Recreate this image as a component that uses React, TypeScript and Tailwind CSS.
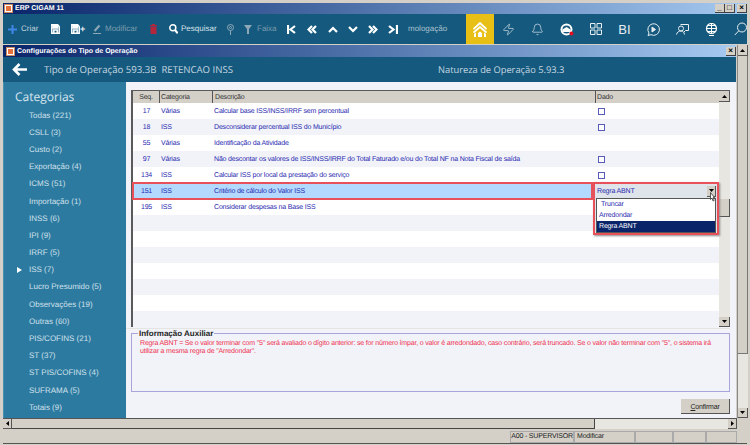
import React from 'react';
import { Bell, Zap } from 'lucide-react';

const categorias = [
  'Todas (221)', 'CSLL (3)', 'Custo (2)', 'Exportação (4)', 'ICMS (51)', 'Importação (1)', 'INSS (6)', 'IPI (9)', 'IRRF (5)',
  'ISS (7)', 'Lucro Presumido (5)', 'Observações (19)', 'Outras (60)', 'PIS/COFINS (21)', 'ST (37)', 'ST PIS/COFINS (4)', 'SUFRAMA (5)', 'Totais (9)',
];

const linhas = [
  { seq: '17', cat: 'Várias', desc: 'Calcular base ISS/INSS/IRRF sem percentual', check: true },
  { seq: '18', cat: 'ISS', desc: 'Desconsiderar percentual ISS do Município', check: true },
  { seq: '55', cat: 'Várias', desc: 'Identificação da Atividade', check: false },
  { seq: '97', cat: 'Várias', desc: 'Não descontar os valores de ISS/INSS/IRRF do Total Faturado e/ou do Total NF na Nota Fiscal de saída', check: true },
  { seq: '134', cat: 'ISS', desc: 'Calcular ISS por local da prestação do serviço', check: true },
  { seq: '151', cat: 'ISS', desc: 'Critério de cálculo do Valor ISS', check: false, sel: true },
  { seq: '195', cat: 'ISS', desc: 'Considerar despesas na Base ISS', check: false },
  { seq: '', cat: '', desc: '', check: false },
  { seq: '', cat: '', desc: '', check: false },
  { seq: '', cat: '', desc: '', check: false },
  { seq: '', cat: '', desc: '', check: false },
  { seq: '', cat: '', desc: '', check: false },
  { seq: '', cat: '', desc: '', check: false },
];

const Logo = () => (
  <span className="w-[9px] h-[9px] bg-white border border-[#c98a60] flex items-center justify-center">
    <span className="w-[5px] h-[5px] bg-[#e8703a]" />
  </span>
);

const gradient = 'bg-gradient-to-r from-[#0a246a] to-[#a6caf0]';

const WinBtn = ({ children }: { children: React.ReactNode }) => (
  <span className="w-[10px] h-[9px] bg-[#d4d0c8] border-r border-b border-[#404040] flex items-center justify-center text-[8px] leading-none text-black font-bold">{children}</span>
);

const Arrow = ({ d }: { d: string }) => (
  <svg width="5" height="5" viewBox="0 0 5 5"><path d={d} fill="#000" /></svg>
);

const ScrollBtn = ({ d, className }: { d: string; className?: string }) => (
  <span className={`shrink-0 flex items-center justify-center bg-[#d4d0c8] border-r border-b border-[#555] ${className || ''}`}>
    <Arrow d={d} />
  </span>
);

const SaveIcon = () => (
  <svg className="shrink-0" width="9" height="10" viewBox="0 0 9 10" fill="none" stroke="#fff" strokeWidth="1.5">
    <path d="M.8.800h5.700L8.200 2.500V9.200H.8z" />
    <path d="M2 1h4.500v3H2z" fill="#fff" />
    <path d="M2.800 9.200V6h3.400v3.200" />
  </svg>
);

const Chevron = ({ d, w = 10 }: { d: string; w?: number }) => (
  <svg className="shrink-0" width={w} height="9" viewBox={`0 0 ${w} 9`} fill="none" stroke="#fff" strokeWidth="2.200"><path d={d} /></svg>
);

const Txt = ({ w, ml, cor, children }: { w: string; ml: string; cor: string; children: React.ReactNode }) => (
  <span className={`shrink-0 whitespace-nowrap ${w} ${ml} ${cor}`}>{children}</span>
);

export default function App() {
  return (
    <div className="w-[750px] h-[445px] bg-[#d4d0c8] overflow-hidden flex flex-col pt-[3px] pl-[3px] pr-[3px] text-[7px] leading-none [text-rendering:geometricPrecision] font-['Liberation_Sans',Arial,sans-serif]">
      {/* janela principal */}
      <div className={`h-[11px] shrink-0 flex items-center justify-between ${gradient}`}>
        <div className="flex items-center gap-[2px] pl-[1px]">
          <Logo />
          <span className="text-white font-bold text-[7px]">ERP CIGAM 11</span>
        </div>
        <div className="flex"><WinBtn>_</WinBtn><WinBtn>□</WinBtn><span className="w-[2px]" /><WinBtn>×</WinBtn></div>
      </div>

      <div className="h-[30px] shrink-0 bg-[#155a7e] flex items-center text-[8px] overflow-hidden">
        <svg className="shrink-0 ml-[5px]" width="9" height="9" viewBox="0 0 9 9"><path d="M3.500 0h2v3.500H9v2H5.500V9h-2V5.500H0v-2h3.500z" fill="#3f86e6" /></svg>
        <Txt w="w-[17px]" ml="ml-[4px]" cor="text-[#c3d4de]">Criar</Txt>
        <span className="ml-[13px] flex"><SaveIcon /></span>
        <span className="ml-[11px] flex items-center w-[14px] shrink-0"><SaveIcon /><span className="text-[#e6eef3] text-[9px] font-bold">+</span></span>
        <svg className="shrink-0 ml-[8px]" width="8" height="10" viewBox="0 0 8 10" fill="none" stroke="#8ea8b8"><path d="M1.500 7L6.500 1.500" strokeWidth="2" /><path d="M0 9.500h8" strokeWidth="1" /></svg>
        <Txt w="w-[35px]" ml="ml-[4px]" cor="text-[#7c9bad]">Modificar</Txt>
        <svg className="shrink-0 ml-[10px]" width="7" height="10" viewBox="0 0 7 10" fill="#b3263c"><path d="M0 1h7v1H0zM2 0h3v1H2zM.5 2.500h6V10h-6z" /></svg>
        <svg className="shrink-0 ml-[12px]" width="9" height="10" viewBox="0 0 9 10" fill="none" stroke="#fff" strokeWidth="1.500"><circle cx="3.800" cy="3.800" r="3" /><path d="M6 6l2.700 3.300" strokeWidth="2" /></svg>
        <Txt w="w-[35px]" ml="ml-[3px]" cor="text-[#d5e2ea]">Pesquisar</Txt>
        <svg className="shrink-0 ml-[11px]" width="7" height="11" viewBox="0 0 7 11" fill="none" stroke="#8ea8b8"><circle cx="3.500" cy="3.500" r="3" /><circle cx="3.500" cy="3.500" r="1" /><path d="M3.500 6.500V11" /></svg>
        <svg className="shrink-0 ml-[10px]" width="8" height="9" viewBox="0 0 8 9" fill="#8ea8b8"><path d="M0 0h8L5 4v5H3V4z" /></svg>
        <Txt w="w-[18px]" ml="ml-[5px]" cor="text-[#7c9bad]">Faixa</Txt>
        <span className="ml-[12px] flex shrink-0"><Chevron w={9} d="M1 0v9M8 1L3.500 4.500 8 8" /></span>
        <span className="ml-[11px] flex shrink-0"><Chevron d="M5 1L1.500 4.500 5 8M9 1L5.500 4.500 9 8" /></span>
        <span className="ml-[11px] flex shrink-0"><Chevron d="M1 7l4-4 4 4" /></span>
        <span className="ml-[10px] flex shrink-0"><Chevron d="M1 2l4 4 4-4" /></span>
        <span className="ml-[10px] flex shrink-0"><Chevron d="M1 1l3.500 3.500L1 8M5 1l3.500 3.500L5 8" /></span>
        <span className="ml-[10px] flex shrink-0"><Chevron d="M1 1l4.500 3.500L1 8M9 0v9" /></span>
        <Txt w="w-[42px]" ml="ml-[10px]" cor="text-[#a9c0ce]">mologação</Txt>
        <span className="ml-[16px] w-[28px] h-[30px] shrink-0 bg-[#e8c015] flex items-center justify-center">
          <svg width="14" height="15" viewBox="0 0 14 15" fill="none" stroke="#fff" strokeWidth="1.800">
            <path d="M.5 7L7 1l6.500 6M.5 10.500L7 5l6.500 5.500" />
            <path d="M1 15v-3l2-1.500V15zM13 15v-3l-2-1.500V15zM5 15v-4l2-1.500L9 11v4z" fill="#fff" stroke="none" />
          </svg>
        </span>
        <div className="flex shrink-0">
          {[
            <Zap size={13} strokeWidth={1.2} color="#e8eef2" />,
            <Bell size={13} strokeWidth={1.2} color="#e8eef2" />,
            <svg width="14" height="13" viewBox="0 0 14 13" fill="none">
              <circle cx="6.500" cy="6.500" r="5" stroke="#fff" strokeWidth="2" />
              <path d="M2.500 6.500L6.500 4l4 2.500V9h-8z" fill="#fff" />
              <circle cx="11.500" cy="10.500" r="2" fill="#e01020" />
            </svg>,
            <svg width="12" height="12" viewBox="0 0 12 12" fill="none" stroke="#e8eef2"><path d="M.5.500h4.500v4.500H.5zM7 .5h4.500v4.500H7zM.5 7h4.500v4.500H.5zM7 7h4.500v4.500H7z" /></svg>,
            <span className="text-[13px] text-[#e8eef2]">BI</span>,
            <svg width="13" height="13" viewBox="0 0 13 13" fill="none" stroke="#e8eef2"><path d="M2 10A5.800 5.800 0 1 1 4 11.700L1 12.500z" /><path d="M5 4l3.500 2.500L5 9z" fill="#e8eef2" /></svg>,
            <svg width="13" height="12" viewBox="0 0 13 12" fill="none" stroke="#e8eef2"><circle cx="5" cy="5.500" r="2.500" /><path d="M.5 11.500C1 9 3 8 5 8s3 1 3.500 3.500M4.500 1.500h8v6H9.500L8 9" /></svg>,
            <svg width="13" height="13" viewBox="0 0 13 13" fill="none" stroke="#fff"><circle cx="6.500" cy="5.500" r="5" strokeWidth="1.200" /><path d="M1.500 5.500h10M6.500.5v10M3 2.500h7M3 8.500h7" /><path d="M4 12.500h5" /></svg>,
            <svg width="13" height="14" viewBox="0 0 13 14" fill="none" stroke="#e8eef2"><circle cx="8" cy="5.500" r="4.500" /><path d="M4.800 8.800L.8 13" /></svg>,
          ].map((ic, i) => (
            <span key={i} className="w-[29px] shrink-0 flex justify-center items-center">{ic}</span>
          ))}
        </div>
      </div>

      {/* area de trabalho */}
      <div className="h-[373px] shrink-0 flex mt-[1px]">
        <div className="w-[733px] shrink-0 flex flex-col">
          <div className={`h-[12px] shrink-0 flex items-center justify-between ${gradient}`}>
            <div className="flex items-center gap-[2px] pl-[3px]">
              <Logo />
              <span className="text-white font-bold text-[7px]">Configurações do Tipo de Operação</span>
            </div>
            <WinBtn>×</WinBtn>
          </div>
          <div className="h-[25px] shrink-0 bg-[#155a7e] flex items-center text-[#c5d6e0] text-[9.600px] font-['Open_Sans',sans-serif]">
            <svg className="shrink-0 ml-[9px]" width="15" height="13" viewBox="0 0 15 13" fill="none" stroke="#fff" strokeWidth="2.600"><path d="M15 6.500H2M7.500 1L2 6.500L7.500 12" /></svg>
            <span className="ml-[17px] w-[394px] whitespace-pre">Tipo de Operação 593.3B  RETENCAO INSS</span>
            <span className="text-[9.300px]">Natureza de Operação 5.93.3</span>
          </div>

          <div className="flex-1 flex min-h-0">
            <aside className="w-[123px] shrink-0 bg-[#2d7aa1] border-l border-[#4a8fb2] pt-[9px]">
              <div className="pl-[11px] text-[12px] text-[#d8e6ee] h-[15px] font-['Open_Sans',sans-serif]">Categorias</div>
              <ul className="mt-[1px]">
                {categorias.map((c) => (
                  <li key={c} className="h-[17.200px] flex items-center pl-[25px] text-[8px] text-[#cfe0e9] relative">
                    {c === 'ISS (7)' && <span className="absolute left-[13px] w-0 h-0 border-y-[3px] border-y-transparent border-l-[5px] border-l-white" />}
                    {c}
                  </li>
                ))}
              </ul>
            </aside>

            <main className="flex-1 bg-[#f1f3f9] pl-[5px] pt-[8px] flex flex-col tracking-[-0.18px]">
              {/* grade */}
              <div className="w-[599px] h-[237px] shrink-0 flex border-l-2 border-t border-[#5a5a5a] relative">
                <div className="flex-1 flex flex-col min-w-0">
                  <div className="h-[12px] shrink-0 flex bg-[#d4d0c8] text-[#333]">
                    <span className="w-[27px] border-r border-[#555] flex items-center justify-center">Seq.</span>
                    <span className="w-[53px] border-r border-[#555] flex items-center pl-[1px]">Categoria</span>
                    <span className="w-[383px] border-r border-[#555] flex items-center pl-[2px]">Descrição</span>
                    <span className="flex-1 flex items-center pl-[1px]">Dado</span>
                  </div>
                  <div className="bg-white">
                    {linhas.map((l, i) => (
                      <div key={i} className={`h-[16px] flex items-center text-[#2a2ab0] ${l.sel ? 'bg-[#b3d9ff]' : i % 2 ? 'bg-[#f1f3f9]' : 'bg-white'}`}>
                        <span className="w-[27px] text-center">{l.seq}</span>
                        <span className="w-[53px] pl-[1px]">{l.cat}</span>
                        <span className="w-[383px] pl-[1px] whitespace-nowrap">{l.desc}</span>
                        <span className="flex-1 pl-[2px] flex">
                          {l.check && <span className="w-[7px] h-[7px] border border-[#5a5ab8] bg-white" />}
                        </span>
                      </div>
                    ))}
                  </div>
                </div>
                <div className="w-[11px] shrink-0 bg-[#e8e6e0] flex flex-col">
                  <ScrollBtn d="M2.500 1L5 4H0z" className="h-[11px]" />
                  <div className="h-[97px] shrink-0" />
                  <div className="h-[18px] shrink-0 bg-[#d4d0c8] border-r border-b border-[#555]" />
                  <div className="flex-1" />
                  <ScrollBtn d="M0 1h5L2.500 4z" className="h-[10px]" />
                </div>
                {/* destaque da linha e combo aberto */}
                <div className="absolute -left-[1px] top-[91px] w-[461px] h-[18px] border-2 border-[#e8505a] pointer-events-none" />
                <div className="absolute left-[460px] top-[91px] w-[126px] h-[53px] border-2 border-[#e8505a] bg-[#dfe3ea] px-[1px] text-[#2a2ab0] shadow-[1px_1px_2px_#888]">
                  <div className="h-[14px] flex items-center justify-between pl-[1px]">
                    Regra ABNT
                    <ScrollBtn d="M0 1h5L2.500 4z" className="w-[9px] h-[11px]" />
                  </div>
                  <div className="bg-white border border-[#555] flex flex-col">
                    <span className="h-[11px] flex items-center pl-[4px]">Truncar</span>
                    <span className="h-[11px] flex items-center pl-[2px]">Arredondar</span>
                    <span className="h-[11px] flex items-center pl-[2px] bg-[#0a246a] text-white">Regra ABNT</span>
                  </div>
                </div>
                <svg className="absolute left-[575px] top-[100px]" width="8" height="12" viewBox="0 0 8 12"><path d="M2.500 1.500v7l1.500-1.500 1 3 1.200-.5-1-3H6.500z" fill="#fff" stroke="#333" strokeWidth=".8" /></svg>
              </div>
              <div className="h-px w-[604px] -ml-[5px] mt-[1px] bg-[#e4e4e0]" />

              {/* informação auxiliar */}
              <div className="w-[599px] h-[59px] shrink-0 mt-[4px] border border-[#a8a4dc] pl-[8px] relative">
                <span className="absolute left-[6px] -top-[4px] px-[1px] bg-[#f1f3f9] text-[8px] tracking-normal font-bold text-[#222]">Informação Auxiliar</span>
                <p className="text-[#f03050] leading-[8px] mt-[6px] whitespace-nowrap">
                  Regra ABNT = Se o valor terminar com "5" será avaliado o dígito anterior: se for número ímpar, o valor é arredondado, caso contrário, será truncado. Se o valor não terminar com "5", o sistema irá
                  <br />
                  utilizar a mesma regra de "Arredondar".
                </p>
              </div>
              <div className="w-[599px] flex justify-end mt-[7px]">
                <button className="w-[49px] h-[15px] bg-[#d4d0c8] border-r border-b border-[#555] text-[#222]"><span className="underline">C</span>onfirmar</button>
              </div>
            </main>
          </div>
        </div>

        {/* barra vertical da janela */}
        <div className="w-[11px] ml-[1px] shrink-0 bg-[#e8e6e0] flex flex-col border-l border-[#888]">
          <ScrollBtn d="M2.500 1L5 4H0z" className="h-[11px]" />
          <div className="h-[298px] shrink-0 bg-[#d4d0c8] border-b border-r border-[#777]" />
          <div className="flex-1" />
          <ScrollBtn d="M0 1h5L2.500 4z" className="h-[10px]" />
        </div>
      </div>

      {/* barra horizontal */}
      <div className="h-[11px] shrink-0 flex border-t border-[#555] w-[734px]">
        <ScrollBtn d="M1 2.500L4 0v5z" className="w-[9px]" />
        <div className="w-[583px] bg-[#d4d0c8] border-r border-b border-[#444]" />
        <div className="flex-1 bg-[#e8e6e0]" />
        <ScrollBtn d="M1 0l3 2.500L1 5z" className="w-[9px]" />
      </div>

      {/* status */}
      <div className="h-[14px] shrink-0 mt-[1px] flex items-center justify-end text-[#222] border-b border-[#555] whitespace-nowrap tracking-[-0.18px]">
        <span className="w-[64px] h-[12px] flex items-center justify-center border border-[#aaa]">A00 - SUPERVISOR</span>
        <span className="w-[61px] h-[12px] flex items-center pl-[2px] border border-[#aaa]">Modificar</span>
        <span className="w-[38px] h-[12px] border border-[#aaa]" />
        <span className="w-[33px] h-[12px] border border-[#aaa]" />
        <span className="w-[31px] h-[12px] border border-[#aaa]" />
        <span className="w-[10px]" />
      </div>
    </div>
  );
}
